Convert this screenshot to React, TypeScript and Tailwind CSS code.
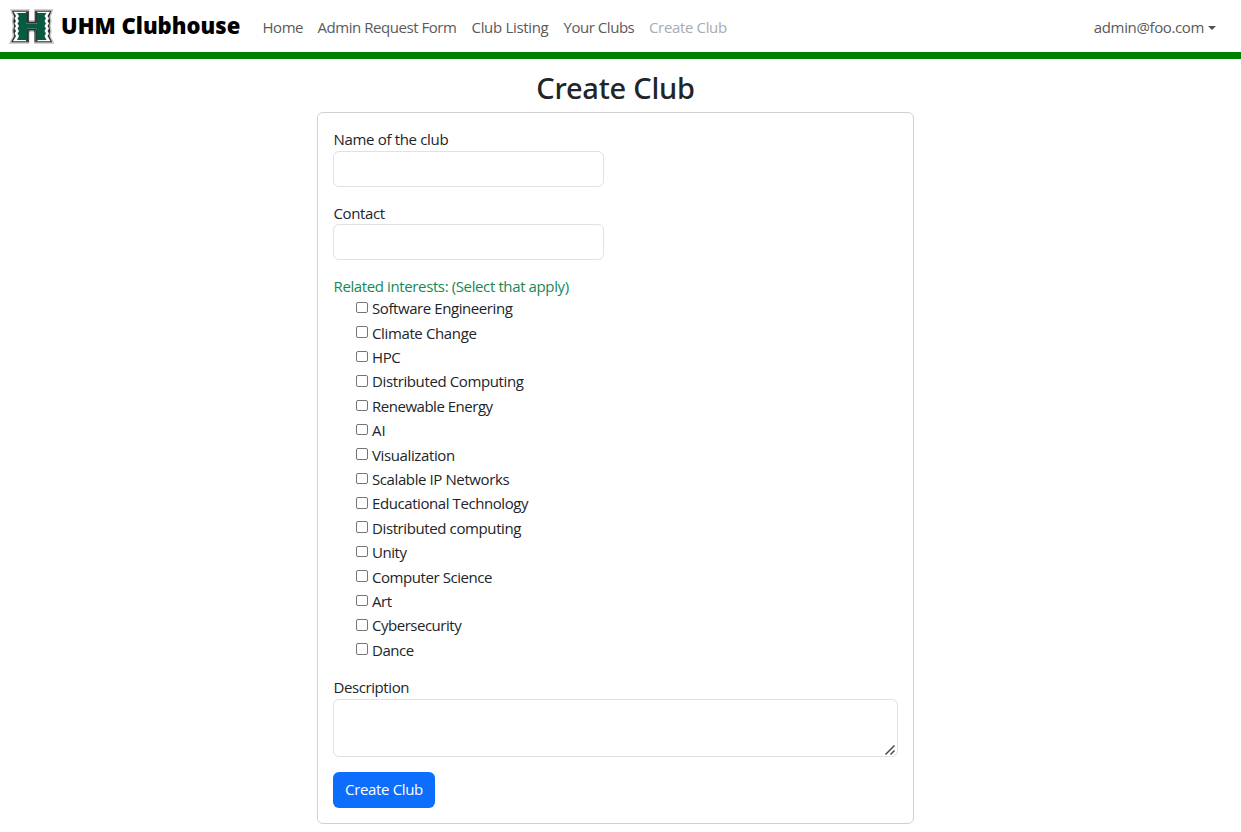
const links = [
  { label: "Home", className: "w-[55px] tracking-[-0.45px]" },
  { label: "Admin Request Form", className: "w-[154px] tracking-[-0.45px]" },
  { label: "Club Listing", className: "w-[92px] tracking-[-0.32px]" },
  { label: "Your Clubs", className: "w-[85.5px] tracking-[-0.46px]" },
  { label: "Create Club", className: "tracking-[-0.35px] text-[#a7acb1]" },
];

const interests = [
  { label: "Software Engineering", className: "tracking-[-0.42px]" },
  { label: "Climate Change", className: "tracking-[-0.37px]" },
  { label: "HPC", className: "tracking-[-0.4px]" },
  { label: "Distributed Computing", className: "tracking-[-0.38px]" },
  { label: "Renewable Energy", className: "tracking-[-0.48px]" },
  { label: "AI", className: "tracking-[0.1px]" },
  { label: "Visualization", className: "tracking-[-0.38px]" },
  { label: "Scalable IP Networks", className: "tracking-[-0.4px]" },
  { label: "Educational Technology", className: "tracking-[-0.42px]" },
  { label: "Distributed computing", className: "tracking-[-0.39px]" },
  { label: "Unity", className: "tracking-[-0.45px]" },
  { label: "Computer Science", className: "tracking-[-0.43px]" },
  { label: "Art", className: "tracking-[-0.4px]" },
  { label: "Cybersecurity", className: "tracking-[-0.48px]" },
  { label: "Dance", className: "tracking-[-0.45px]" },
];

function Logo() {
  const outline =
    "M3 2H21.500V13H26V2H44.500L42 8.500L43 13L42 18L43 23L42 28L45.200 35H25.500V23H22V35H2L5.500 28L4.500 23L5.500 18L4.500 13L5.500 8.500Z";
  const trim =
    "M5.500 3.800H19.800V14.700H27.700V3.800H42L39.500 8L41 10.500L39.500 13L41 15.500L39.500 18L41 20.500L39.500 23L41 25.500L39.500 28L42.500 33.200H27.300V21.500H20.200V33.200H5L8 28L6.500 25.500L8 23L6.500 20.500L8 18L6.500 15.500L8 13L6.500 10.500L8 8Z";
  const body =
    "M9 5H18.600V15.500H29V5H38.500L36.500 8L38 10.500L36.500 13L38 15.500L36.500 18L38 20.500L36.500 23L38 25.500L36.500 28L38.500 32H28.600V20.800H19V32H9L11 28L9.500 25.500L11 23L9.500 20.500L11 18L9.500 15.500L11 13L9.500 10.500L11 8Z";
  return (
    <svg viewBox="0 0 47 37" className="mr-[-1px] h-[37px] w-[47px] shrink-0" aria-hidden="true">
      <path d={outline} fill="#302f31" stroke="#c4c4c4" strokeWidth="1.400" />
      <path d={trim} fill="#fff" />
      <path d="M18 4h2.200v10.800H18zM27.300 4h2.200v10.800h-2.200zM18 21.500h2.200v11.700H18zM27.300 21.500h2.200v11.700h-2.200zM19 14h9.600v1.500H19zM19 20.800h9.600v1.500H19z" fill="#302f31" />
      <path d={body} fill="#075b40" />
      <path d="M21.300 1.500h5v10.500h-5zM21.300 24.200h5v11.500h-5z" fill="#fff" />
    </svg>
  );
}

const field = "block rounded-[6px] border border-[#dee2e6] bg-white outline-none";

export default function App() {
  return (
    <div className="min-h-[832px] bg-white font-['Open_Sans','Noto_Sans',sans-serif] text-[15px] text-[#212529]">
      <header className="flex h-[59px] items-center border-b-[7px] border-[#008000] pl-2 pr-[25px]">
        <Logo />
        <span className="ml-[7px] w-[201px] shrink-0 whitespace-nowrap pb-[3px] text-[22px] leading-[30px] font-extrabold text-black">
          UHM Clubhouse
        </span>
        <nav className="flex pt-[3px] pl-[0.500px] leading-[23px] text-[#595a5b]">
          {links.map((l) => (
            <a key={l.label} className={`shrink-0 whitespace-nowrap ${l.className}`}>
              {l.label}
            </a>
          ))}
        </nav>
        <button className="ml-auto flex items-center pt-[3px] leading-[23px] tracking-[-0.37px] text-[#595a5b]">
          admin@foo.com
          <span className="ml-1 border-x-4 border-t-4 border-x-transparent border-t-[#4d5154]" />
        </button>
      </header>

      <main className="ml-[317px] w-[597px]">
        <h2 className="pt-[11px] text-center font-['Noto_Sans'] text-[29px] leading-[36px] font-medium tracking-[-0.24px]">
          Create Club
        </h2>
        <form className="mt-1.5 h-[712px] rounded-[6px] border border-[#d0d1d3] p-[15px]">
          <label className="block h-[23px] pl-[0.500px] leading-[23px] tracking-[-0.33px]">Name of the club</label>
          <input className={`${field} h-9 w-[271px]`} />
          <label className="mt-3.5 block h-[23px] pl-[0.500px] leading-[25px] tracking-[-0.37px]">Contact</label>
          <input className={`${field} h-9 w-[271px]`} />
          <p className="mt-3.5 h-[23px] pl-[0.500px] leading-[25px] tracking-[-0.38px] text-[#198754]">
            Related interests: (Select that apply)
          </p>
          <div className="pl-[23px]">
            {interests.map((i) => (
              <label key={i.label} className="flex h-[24.4px] items-center leading-[23px]">
                <input
                  type="checkbox"
                  className="mr-[4.500px] mb-[3px] h-[11.500px] w-[11.500px] appearance-none rounded-[2px] border border-[#767676] bg-white"
                />
                <span className={`pb-[0.800px] ${i.className}`}>{i.label}</span>
              </label>
            ))}
          </div>
          <label className="mt-[13px] block h-[23px] pl-[0.500px] leading-[23px] tracking-[-0.41px]">Description</label>
          <div className="relative w-[565px]">
            <textarea className={`${field} h-[58px] w-full resize-none`} />
            <svg viewBox="0 0 12 12" className="pointer-events-none absolute right-0.5 bottom-px h-3 w-3" aria-hidden="true">
              <path d="M1.500 10.500L10.500 1.500M6.500 10.500L10.500 6.500" fill="none" stroke="#4a4a4a" strokeWidth="1.500" />
            </svg>
          </div>
          <button
            type="button"
            className="mt-[15px] h-9 w-[102px] rounded-[6px] bg-[#0d6efd] pb-0.5 text-center tracking-[-0.35px] text-white"
          >
            Create Club
          </button>
        </form>
      </main>
    </div>
  );
}
